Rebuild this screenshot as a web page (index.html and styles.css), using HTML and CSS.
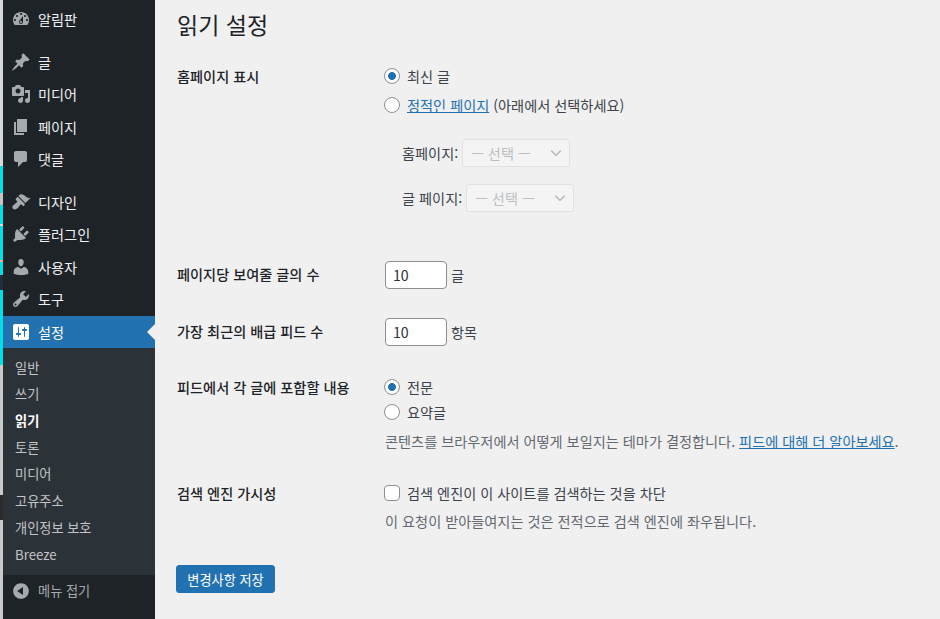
FILE: index.html
```html
<!DOCTYPE html>
<html lang="ko">
<head>
  <meta charset="UTF-8" />
  <title>읽기 설정</title>
  <link rel="stylesheet" href="styles.css">
</head>
<body>
  <div class="edge"></div>

  <aside class="sidebar">
    <ul class="menu">
      <li class="menu-item first"><svg viewBox="0 0 20 20"><path d="M3.76 16h12.48c1.1-1.37 1.76-3.11 1.76-5 0-4.42-3.58-8-8-8s-8 3.58-8 8c0 1.89.66 3.63 1.76 5zM10 4c.55 0 1 .45 1 1s-.45 1-1 1-1-.45-1-1 .45-1 1-1zM6 6c.55 0 1 .45 1 1s-.45 1-1 1-1-.45-1-1 .45-1 1-1zm8 0c.55 0 1 .45 1 1s-.45 1-1 1-1-.45-1-1 .45-1 1-1zm-5.37 5.55L12 7v6c0 1.1-.9 2-2 2s-2-.9-2-2c0-.57.24-1.08.63-1.45zM4 10c.55 0 1 .45 1 1s-.45 1-1 1-1-.45-1-1 .45-1 1-1zm12 0c.55 0 1 .45 1 1s-.45 1-1 1-1-.45-1-1 .45-1 1-1zm-5 3c0-.55-.45-1-1-1s-1 .45-1 1 .45 1 1 1 1-.45 1-1z"/></svg>알림판</li>
      <li class="menu-item gap"><svg viewBox="0 0 20 20"><path d="M10.44 3.02l1.82-1.82 6.36 6.35-1.83 1.82c-1.05-.68-2.48-.57-3.41.36l-.75.75c-.92.93-1.04 2.35-.35 3.41l-1.83 1.82-2.41-2.41-2.8 2.79c-.42.42-3.38 2.71-3.8 2.29s1.86-3.39 2.28-3.81l2.79-2.79L4.1 9.36l1.83-1.82c1.05.69 2.48.57 3.4-.36l.75-.75c.93-.92 1.05-2.35.36-3.41z"/></svg>글</li>
      <li class="menu-item"><svg viewBox="0 0 20 20"><path d="M13 11V4c0-.55-.45-1-1-1h-1.67L9 1H5L3.67 3H2c-.55 0-1 .45-1 1v7c0 .55.45 1 1 1h10c.55 0 1-.45 1-1zM7 4.5c1.38 0 2.5 1.12 2.5 2.5S8.38 9.5 7 9.5 4.5 8.38 4.5 7 5.62 4.5 7 4.5zM14 6h5v10.5c0 1.38-1.12 2.5-2.5 2.5S14 17.88 14 16.5s1.12-2.5 2.5-2.5c.17 0 .34.02.5.05V9h-3V6zm-4 8.05V13h2v3.5c0 1.38-1.12 2.5-2.5 2.5S7 17.88 7 16.5 8.12 14 9.5 14c.17 0 .34.02.5.05z"/></svg>미디어</li>
      <li class="menu-item"><svg viewBox="0 0 20 20"><path d="M6 15V2h10v13H6zm-1 1h8v2H3V5h2v11z"/></svg>페이지</li>
      <li class="menu-item"><svg viewBox="0 0 20 20"><path d="M5 2h9c1.1 0 2 .9 2 2v7c0 1.1-.9 2-2 2h-2l-5 5v-5H5c-1.1 0-2-.9-2-2V4c0-1.1.9-2 2-2z"/></svg>댓글</li>
      <li class="menu-item gap"><svg viewBox="0 0 20 20"><path d="M14.48 11.06L7.41 3.99l1.5-1.5c.5-.56 2.3-.47 3.51.32 1.21.8 1.43 1.28 2.91 2.1 1.18.64 2.45 1.26 4.45.85zm-.71.71L6.7 4.7 4.93 6.47c-.39.39-.39 1.02 0 1.41l1.06 1.06c.39.39.39 1.03 0 1.42-.6.6-1.43 1.11-2.21 1.69-.35.26-.7.53-1.01.84C1.43 13.23.78 15.6 1.95 16.77c1.17 1.17 3.54.52 4.88-.83.31-.31.58-.66.84-1.01.58-.78 1.09-1.61 1.69-2.21.39-.39 1.03-.39 1.42 0l1.06 1.06c.39.39 1.02.39 1.41 0z"/></svg>디자인</li>
      <li class="menu-item"><svg viewBox="0 0 20 20"><path d="M13.11 4.36L9.87 7.6 8 5.73l3.24-3.24c.35-.34 1.05-.2 1.56.32.52.51.66 1.21.31 1.55zm-8 1.77l.91-1.12 9.01 9.01-1.19.84c-.71.71-2.63 1.16-3.82 1.16H6.14L4.9 17.26c-.59.59-1.54.59-2.12 0-.59-.58-.59-1.53 0-2.12l1.24-1.24v-3.88c0-1.13.4-3.19 1.09-3.89zm7.26 3.97l3.24-3.24c.34-.35 1.04-.21 1.55.31.52.51.66 1.21.31 1.55l-3.24 3.25z"/></svg>플러그인</li>
      <li class="menu-item"><svg viewBox="0 0 20 20"><path d="M10 9.25c-2.27 0-2.73-3.44-2.73-3.44C7 4.02 7.82 2 9.97 2c2.16 0 2.98 2.02 2.71 3.81 0 0-.41 3.44-2.68 3.44zm0 2.57L12.72 10c2.39 0 4.52 2.33 4.52 4.53v2.49s-3.65 1.13-7.24 1.13c-3.65 0-7.24-1.13-7.24-1.13v-2.49c0-2.25 1.94-4.48 4.47-4.48z"/></svg>사용자</li>
      <li class="menu-item"><svg viewBox="0 0 20 20"><path d="M16.68 9.77c-1.34 1.34-3.3 1.67-4.95.99l-5.41 6.52c-.99.99-2.59.99-3.58 0s-.99-2.59 0-3.57l6.52-5.42c-.68-1.65-.35-3.61.99-4.95 1.28-1.28 3.12-1.62 4.72-1.06l-2.89 2.89 2.82 2.82 2.86-2.87c.53 1.58.18 3.39-1.08 4.65zM3.81 16.21c.4.39 1.04.39 1.43 0 .4-.4.4-1.04 0-1.43-.39-.4-1.03-.4-1.43 0-.39.39-.39 1.03 0 1.43z"/></svg>도구</li>
      <li class="menu-item active"><svg viewBox="0 0 20 20"><path d="M18 16V4c0-1.1-.9-2-2-2H4c-1.1 0-2 .9-2 2v12c0 1.1.9 2 2 2h12c1.1 0 2-.9 2-2zM8 11h1c.55 0 1 .45 1 1s-.45 1-1 1H8v1.5c0 .28-.22.5-.5.5s-.5-.22-.5-.5V13H6c-.55 0-1-.45-1-1s.45-1 1-1h1V5.5c0-.28.22-.5.5-.5s.5.22.5.5V11zm5-2h-1c-.55 0-1-.45-1-1s.45-1 1-1h1V5.5c0-.28.22-.5.5-.5s.5.22.5.5V7h1c.55 0 1 .45 1 1s-.45 1-1 1h-1v5.5c0 .28-.22.5-.5.5s-.5-.22-.5-.5V9z"/></svg>설정</li>
    </ul>
    <ul class="submenu">
      <li>일반</li>
      <li>쓰기</li>
      <li class="current">읽기</li>
      <li>토론</li>
      <li>미디어</li>
      <li>고유주소</li>
      <li>개인정보 보호</li>
      <li>Breeze</li>
    </ul>
    <div class="collapse"><svg viewBox="0 0 20 20"><path d="M10 2.16c4.33 0 7.84 3.51 7.84 7.84s-3.51 7.84-7.84 7.84S2.16 14.33 2.16 10 5.67 2.16 10 2.16zm2 11.72V6.12L6.18 10z"/></svg>메뉴 접기</div>
  </aside>

  <main class="content">
    <h1 class="page-title">읽기 설정</h1>

    <form class="settings">
      <section class="row home-row">
        <h2 class="row-label">홈페이지 표시</h2>
        <div class="row-body">
          <label class="choice"><input type="radio" name="front" checked>최신 글</label>
          <label class="choice second"><input type="radio" name="front"><span><a href="#">정적인 페이지</a> (아래에서 선택하세요)</span></label>
          <div class="pick-list">
            <label class="pick">홈페이지: <select disabled><option>— 선택 —</option></select></label>
            <label class="pick">글 페이지: <select disabled><option>— 선택 —</option></select></label>
          </div>
        </div>
      </section>

      <section class="row count-row">
        <h2 class="row-label">페이지당 보여줄 글의 수</h2>
        <div class="row-body inline"><input class="num" type="number" value="10"> 글</div>
      </section>

      <section class="row count-row second-count">
        <h2 class="row-label">가장 최근의 배급 피드 수</h2>
        <div class="row-body inline"><input class="num" type="number" value="10"> 항목</div>
      </section>

      <section class="row feed-row">
        <h2 class="row-label">피드에서 각 글에 포함할 내용</h2>
        <div class="row-body">
          <label class="choice"><input type="radio" name="feed" checked>전문</label>
          <label class="choice second-feed"><input type="radio" name="feed">요약글</label>
          <p class="note">콘텐츠를 브라우저에서 어떻게 보일지는 테마가 결정합니다. <a href="#">피드에 대해 더 알아보세요</a>.</p>
        </div>
      </section>

      <section class="row search-row">
        <h2 class="row-label">검색 엔진 가시성</h2>
        <div class="row-body">
          <label class="choice"><input type="checkbox">검색 엔진이 이 사이트를 검색하는 것을 차단</label>
          <p class="note search-note">이 요청이 받아들여지는 것은 전적으로 검색 엔진에 좌우됩니다.</p>
        </div>
      </section>

      <button class="save" type="button">변경사항 저장</button>
    </form>
  </main>
</body>
</html>
```

FILE: styles.css
```css
* { margin: 0; padding: 0; box-sizing: border-box; }

html, body { height: 100%; overflow: hidden; }

body {
  display: flex;
  background: #f0f0f1;
  color: #3c434a;
  font-family: "Noto Sans CJK KR", "Liberation Sans", sans-serif;
  font-size: 14.2px;
  line-height: 20px;
}

/* sliver of the window behind the admin page */
.edge {
  width: 3px;
  flex: none;
  background: linear-gradient(to bottom,
    #d8d8d8 0, #d8d8d8 166px,
    #00dfe3 166px, #00dfe3 193px,
    #c4c4c4 193px, #c4c4c4 205px,
    #00dfe3 205px, #00dfe3 224px,
    #d9d9d9 224px, #d9d9d9 226px,
    #00dfe3 226px, #00dfe3 260px,
    #e0b0a0 260px, #e0b0a0 262px,
    #00dfe3 262px, #00dfe3 275px,
    #20303a 275px, #20303a 290px,
    #00dfe3 290px, #00dfe3 365px,
    #c9c9c9 365px, #c9c9c9 495px,
    #2a2a2a 495px, #2a2a2a 520px,
    #c9c9c9 520px, #c9c9c9 100%);
}

.sidebar {
  width: 152px;
  flex: none;
  display: flex;
  flex-direction: column;
  background: #1d2327;
  color: #f0f0f1;
}

.menu, .submenu { list-style: none; }

.menu-item {
  display: flex;
  align-items: center;
  gap: 7px;
  height: 32.3px;
  padding-left: 8px;
}
.menu-item svg, .collapse svg {
  width: 20px;
  height: 20px;
  flex: none;
  fill: #a7aaad;
}
.menu-item.first { margin-top: 3px; }
.menu-item.gap { margin-top: 10.7px; }

.menu-item.active {
  position: relative;
  margin-top: 1px;
  background: #2271b1;
  color: #fff;
}
.menu-item.active svg { fill: #fff; }
.menu-item.active::after {
  content: "";
  position: absolute;
  right: 0;
  top: 50%;
  margin-top: -8px;
  border: 8px solid transparent;
  border-left: 0;
  border-right-color: #f0f0f1;
}

.submenu {
  background: #2c3338;
  color: #c3c4c7;
  font-size: 13.2px;
  padding: 6px 0 7px;
  height: 227px;
}
.submenu li {
  height: 26.7px;
  padding-left: 12px;
  display: flex;
  align-items: center;
}
.submenu .current { color: #fff; font-weight: 700; }

.collapse {
  display: flex;
  align-items: center;
  gap: 7px;
  padding: 6px 0 0 8px;
  color: #a7aaad;
  font-size: 13.2px;
}

.content {
  flex: 1;
  padding: 0 22px;
}

.page-title {
  font-size: 23px;
  font-weight: 400;
  line-height: 30px;
  color: #1d2327;
  padding-top: 9px;
}

.row { display: flex; }

.row-label {
  width: 208px;
  flex: none;
  font-size: 14.2px;
  font-weight: 500;
  line-height: 20px;
  color: #1d2327;
}

.row-body { flex: 1; }
.inline { display: flex; align-items: center; gap: 4px; height: 28px; }

.home-row { padding-top: 27px; }
.count-row { margin-top: 49px; }
.count-row .row-label { padding-top: 3px; }
.second-count { margin-top: 29px; }
.feed-row { margin-top: 31px; }
.search-row { margin-top: 32px; }

.choice { display: flex; align-items: center; gap: 7px; height: 20px; }
.choice.second { margin-top: 9px; }
.choice.second-feed { margin-top: 5px; }

.choice input {
  appearance: none;
  width: 16px;
  height: 16px;
  flex: none;
  background: #fff;
  border: 1px solid #8c8f94;
  margin-left: -1px;
}
input[type="radio"] { border-radius: 50%; }
input[type="checkbox"] { border-radius: 4px; }
input[type="radio"]:checked {
  background: radial-gradient(circle, #2271b1 0, #2271b1 3.6px, #fff 4.2px);
}

a { color: #2271b1; }

.pick-list {
  padding: 24px 0 0 17px;
  display: flex;
  flex-direction: column;
  gap: 17px;
}
.pick { display: flex; align-items: center; gap: 4px; }
.pick select {
  appearance: none;
  width: 108px;
  height: 28px;
  padding-left: 8px;
  border: 1px solid #dcdcde;
  border-radius: 3px;
  background: #f6f7f7 url("data:image/svg+xml,%3Csvg xmlns='http://www.w3.org/2000/svg' width='20' height='20'%3E%3Cpath d='M4 7l6 6 6-6' fill='none' stroke='%23a7aaad' stroke-width='2'/%3E%3C/svg%3E") no-repeat right 5px top 5px / 16px 16px;
  color: #a7aaad;
  font: inherit;
}

.num {
  width: 62px;
  height: 28px;
  padding: 0 7px;
  border: 1px solid #8c8f94;
  border-radius: 4px;
  background: #fff;
  color: #2c3338;
  font: inherit;
}

.note { color: #646970; margin-top: 9px; }
.search-note { margin-top: 8px; }

.save {
  display: block;
  margin-top: 34px;
  margin-left: -1px;
  width: 99px;
  height: 28px;
  border: 1px solid #2271b1;
  border-radius: 3px;
  background: #2271b1;
  color: #fff;
  font-family: inherit;
  font-size: 13.2px;
}
```
